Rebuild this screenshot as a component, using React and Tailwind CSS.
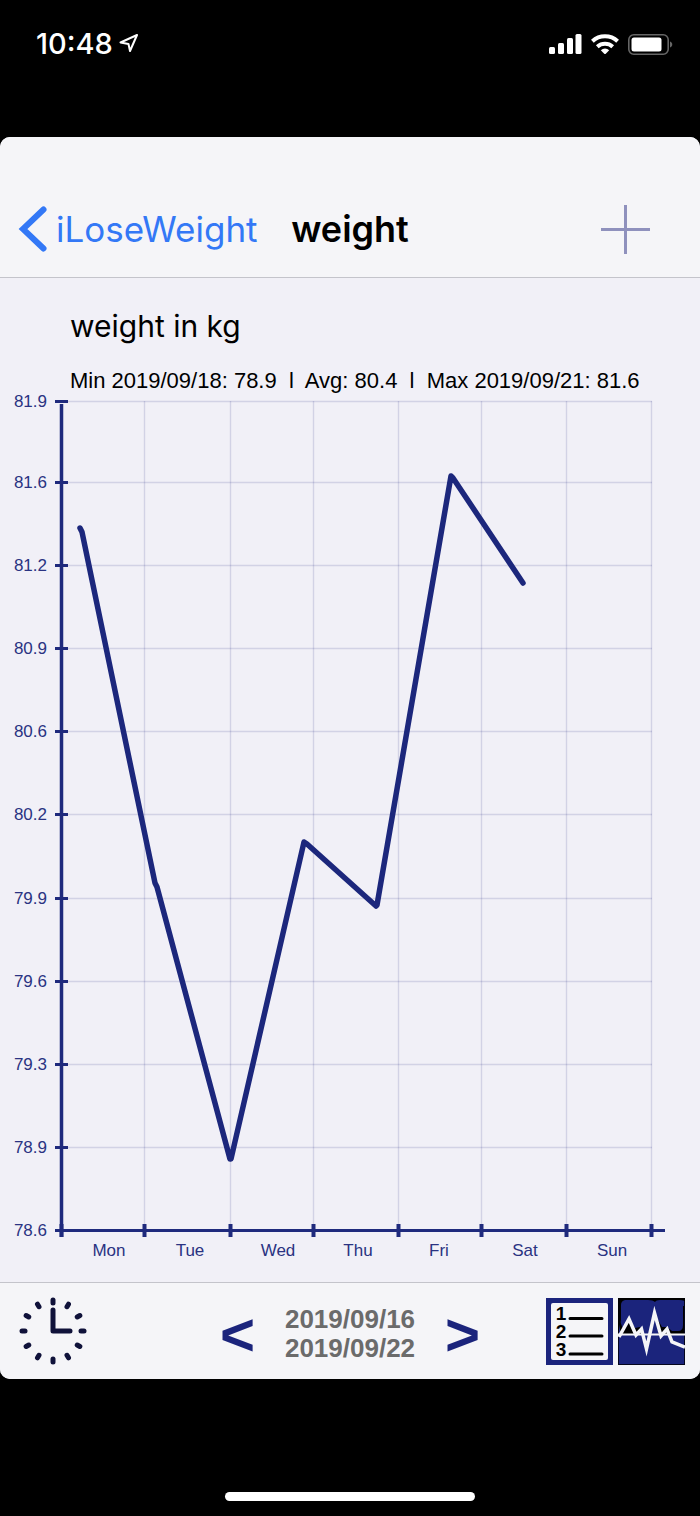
import { useState } from "react";

const ROWS = [
  { label: "81.9", y: 9 },
  { label: "81.6", y: 90 },
  { label: "81.2", y: 173 },
  { label: "80.9", y: 256 },
  { label: "80.6", y: 339 },
  { label: "80.2", y: 422 },
  { label: "79.9", y: 506 },
  { label: "79.6", y: 589 },
  { label: "79.3", y: 672 },
  { label: "78.9", y: 755 },
  { label: "78.6", y: 838 },
];

const COLUMNS = [61, 144, 230, 313, 398, 481, 566, 651];

const DAYS = [
  { label: "Mon", x: 109 },
  { label: "Tue", x: 190 },
  { label: "Wed", x: 278 },
  { label: "Thu", x: 358 },
  { label: "Fri", x: 439 },
  { label: "Sat", x: 525 },
  { label: "Sun", x: 612 },
];

const POINTS = "80,136 82,140 155,491 157,495 230,767 231,767 304,450 307,452 376,514 377,513 451,84 453,86 523,191";

function StatusBar() {
  return (
    <div className="flex h-[137px] items-start justify-between pt-7 pr-[27px] pl-9 text-white">
      <div className="flex h-8 items-center gap-1.5">
        <span className="font-['Inter',sans-serif] text-[29px] leading-8 font-medium">10:48</span>
        <svg width="20" height="20" viewBox="0 0 20 20" fill="none" stroke="currentColor" strokeWidth="2" strokeLinejoin="round">
          <path d="M18 1 11 17 9.500 10 1.500 8.500Z" />
        </svg>
      </div>
      <div className="flex h-8 items-center gap-[9px]">
        <svg width="33" height="20" viewBox="0 0 33 20" fill="currentColor">
          <rect x="0" y="13" width="6" height="7" rx="1.5" />
          <rect x="9" y="9" width="6" height="11" rx="1.5" />
          <rect x="18" y="4" width="6" height="16" rx="1.5" />
          <rect x="26.5" y="0" width="6" height="20" rx="1.5" />
        </svg>
        <svg width="28" height="20" viewBox="0 0 28 20" fill="none" stroke="currentColor" strokeWidth="4">
          <path d="M1.4 7.2A18.5 18.5 0 0 1 26.6 7.2" />
          <path d="M6.3 12.8A11.5 11.5 0 0 1 21.7 12.8" />
          <path d="M14 20.500 9.8 16.300A6 6 0 0 1 18.2 16.300Z" fill="currentColor" stroke="none" />
        </svg>
        <svg width="45" height="21" viewBox="0 0 45 21">
          <rect x="0.8" y="0.8" width="39.4" height="19.4" rx="5" fill="none" stroke="#666" strokeWidth="1.6" />
          <rect x="3.5" y="3.5" width="30" height="14" rx="2.5" fill="#fff" />
          <path d="M42 7.5C45 8.5 45 12.5 42 13.5Z" fill="#666" />
        </svg>
      </div>
    </div>
  );
}

function Header() {
  return (
    <header className="border-b border-[#c4c4cb] bg-[#f5f5f8] pt-11 font-['Inter',sans-serif]">
      <div className="grid h-24 grid-cols-[1fr_auto_1fr] items-center">
        <a href="#home" className="flex items-center gap-2 pl-[18px] text-[35px] leading-10 text-[#3378f6]">
          <svg width="30" height="48" viewBox="0 0 30 48" fill="none" stroke="currentColor" strokeWidth="6" strokeLinecap="round">
            <path d="M25.5 4.5 5 24 25.5 43.5" strokeLinejoin="miter" />
          </svg>
          iLoseWeight
        </a>
        <h1 className="text-[36px] leading-10 font-semibold text-black">weight</h1>
        <button type="button" aria-label="Add weight" className="mr-[50px] justify-self-end">
          <svg width="49" height="49" viewBox="0 0 49 49" stroke="#8f91bd" strokeWidth="3">
            <path d="M0 24.5H49M24.5 0V49" />
          </svg>
        </button>
      </div>
    </header>
  );
}

function WeightChart() {
  return (
    <svg viewBox="0 0 700 890" className="block w-full" role="img" aria-label="weight in kg">
      <g stroke="#1f2a7d" strokeOpacity="0.15" strokeWidth="1.4">
        {ROWS.slice(0, -1).map((row) => (
          <line key={row.label} x1="61" x2="652" y1={row.y + 0.5} y2={row.y + 0.5} />
        ))}
        {COLUMNS.slice(1).map((x) => (
          <line key={x} x1={x + 0.5} x2={x + 0.5} y1="9" y2="838" />
        ))}
      </g>

      {/* axes and tick marks */}
      <g stroke="#1f2a7d" strokeWidth="3">
        <line x1="61.5" x2="61.5" y1="12" y2="845" strokeWidth="3.500" />
        <line x1="55" x2="665" y1="838.5" y2="838.5" />
        {ROWS.map((row) => (
          <line key={row.label} x1="55" x2="68" y1={row.y + 0.5} y2={row.y + 0.5} />
        ))}
        {COLUMNS.map((x) => (
          <line key={x} x1={x + 0.5} x2={x + 0.5} y1="832" y2="845" strokeWidth="4" />
        ))}
      </g>

      <g fill="#2a3382" className="font-['Liberation_Sans',sans-serif] text-[17px]">
        {ROWS.map((row) => (
          <text key={row.label} x="47" y={row.y + 6} textAnchor="end">{row.label}</text>
        ))}
        {DAYS.map((day) => (
          <text key={day.label} x={day.x} y="864" textAnchor="middle">{day.label}</text>
        ))}
      </g>

      <polyline points={POINTS} fill="none" stroke="#1c277c" strokeWidth="5.500" strokeLinecap="round" strokeLinejoin="round" />
    </svg>
  );
}

function ClockIcon() {
  return (
    <svg width="68" height="68" viewBox="0 0 68 68" fill="none" stroke="#10123a" strokeLinecap="round" strokeLinejoin="round">
      {[0, 30, 60, 90, 120, 150, 180, 210, 240, 270, 300, 330].map((angle) => (
        <path key={angle} d="M34 3V6" strokeWidth="5" transform={`rotate(${angle} 34 34)`} />
      ))}
      <path d="M34 13V34H51" strokeWidth="5" />
    </svg>
  );
}

function ListIcon() {
  return (
    <svg width="67" height="67" viewBox="0 0 67 67">
      <rect width="67" height="67" fill="#1b247c" />
      <rect x="5" y="5" width="57" height="57" rx="2" fill="#f5f5f8" />
      <g fill="#000" className="font-['Liberation_Sans',sans-serif] text-[19px] font-bold">
        <text x="15" y="22" textAnchor="middle">1</text>
        <text x="15" y="40" textAnchor="middle">2</text>
        <text x="15" y="58" textAnchor="middle">3</text>
      </g>
      <path d="M24 20.5H56M24 38H56M24 56H56" stroke="#000" strokeWidth="3" strokeLinecap="round" />
    </svg>
  );
}

function PulseIcon() {
  return (
    <svg width="67" height="67" viewBox="0 0 67 67" fill="none">
      <rect width="67" height="67" fill="#05061c" />
      <rect x="1" y="1" width="65" height="65" fill="#1b247c" />
      <path d="M0 0H67V3Q64 2 61 2H42Q38 2 37 4Q35 2 30 2H7Q3 3 3 7V22L0 36Z" fill="#000" />
      <path d="M2 23 5 31 11 20 17 30 22 29 23 36H2Z" fill="#000" />
      <path d="M40 22 44 29 49 29 54 33H60Q65 33 65 27V8H66V36H40Z" fill="#000" />
      <path d="M0 36.5H67" stroke="#f5f5f8" strokeWidth="2" />
      <path d="M1 39 11 21 18 37 23.500 31 28.500 51 36.500 15 43 38 49 31 54 44 67 49" stroke="#f5f5f8" strokeWidth="3.500" strokeMiterlimit="10" />
    </svg>
  );
}

function Toolbar({ view, onViewChange }) {
  return (
    <footer className="grid h-[97px] grid-cols-[1fr_auto_1fr] items-center border-t border-[#c4c4cb] bg-[#f5f5f8] font-['Liberation_Sans',sans-serif]">
      <button type="button" aria-label="Time range" className="justify-self-start pl-[19px]">
        <ClockIcon />
      </button>
      <div className="flex items-center gap-[30px] font-bold">
        <button type="button" aria-label="Previous week" className="pt-2 text-[60px] leading-16 text-[#1b247c]">&lt;</button>
        <p className="pt-1.5 text-[26px] leading-[29px] text-[#6b6b6b]">
          2019/09/16
          <br />
          2019/09/22
        </p>
        <button type="button" aria-label="Next week" className="pt-2 text-[60px] leading-16 text-[#1b247c]">&gt;</button>
      </div>
      <div className="flex gap-[5px] justify-self-end pr-[15px]">
        <button type="button" aria-label="List" aria-pressed={view === "list"} onClick={() => onViewChange("list")}>
          <ListIcon />
        </button>
        <button type="button" aria-label="Chart" aria-pressed={view === "chart"} onClick={() => onViewChange("chart")}>
          <PulseIcon />
        </button>
      </div>
    </footer>
  );
}

export default function App() {
  const [view, setView] = useState("chart");

  return (
    <div className="flex min-h-screen flex-col bg-black">
      <StatusBar />
      <div className="overflow-hidden rounded-[10px] bg-[#f1f0f7]">
        <Header />
        <main>
          <div className="pt-7 pl-[70px] text-black">
            <h2 className="font-['Inter',sans-serif] text-[30px] leading-10">weight in kg</h2>
            <p className="pt-6 font-['Liberation_Sans',sans-serif] text-[22px] leading-[22px] whitespace-pre">
              {"Min 2019/09/18: 78.9  l  Avg: 80.4  l  Max 2019/09/21: 81.6"}
            </p>
          </div>
          <WeightChart />
        </main>
        <Toolbar view={view} onViewChange={setView} />
      </div>
      <div className="flex flex-1 items-end justify-center pb-[15px]">
        <div className="h-[9px] w-[250px] rounded-full bg-white" />
      </div>
    </div>
  );
}
